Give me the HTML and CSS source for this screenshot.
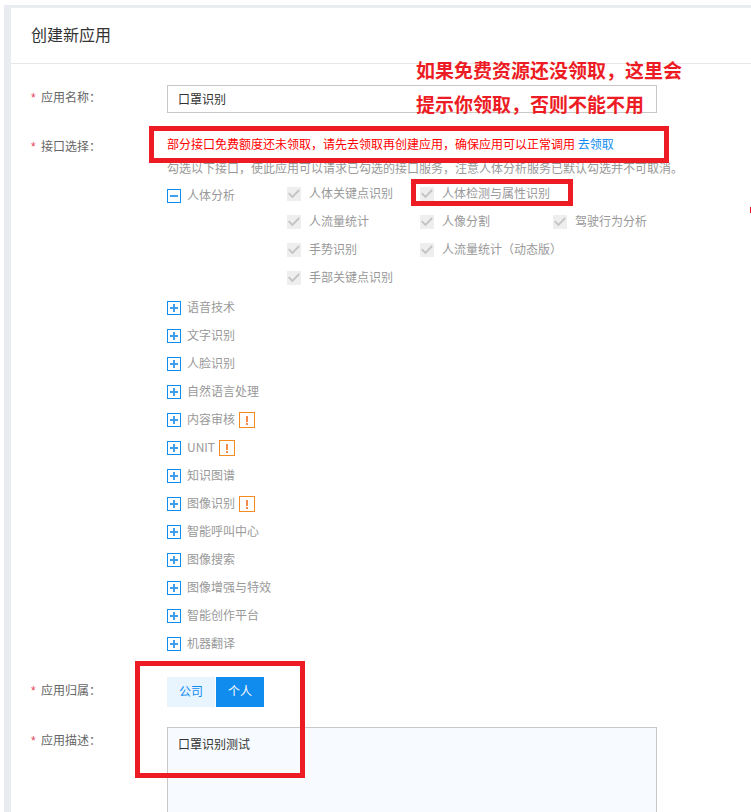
FILE: index.html
```html
<!DOCTYPE html>
<html lang="zh-CN">
<head>
  <meta charset="UTF-8">
  <title>创建新应用</title>
  <link rel="stylesheet" href="styles.css">
</head>
<body>
  <!-- 勾选框里的对勾 -->
  <svg class="defs" width="0" height="0">
    <symbol id="check" viewBox="0 0 14 14">
      <path d="M1.7 6.2L5.4 9.9L12.2 3" fill="none" stroke="#c4c4c4" stroke-width="1.8"/>
    </symbol>
  </svg>

  <div class="panel">
    <h1>创建新应用</h1>

    <form class="form">
      <div class="row row-name">
        <label for="name"><i>*</i>应用名称：</label>
        <input id="name" class="name" type="text" value="口罩识别">
      </div>

      <div class="row row-api">
        <label><i>*</i>接口选择：</label>
        <div class="field">
          <p class="warning">部分接口免费额度还未领取，请先去领取再创建应用，确保应用可以正常调用 <a>去领取</a></p>
          <p class="hint">勾选以下接口，使此应用可以请求已勾选的接口服务，注意人体分析服务已默认勾选并不可取消。</p>

          <div class="group">
            <div class="node open"><span class="toggle minus"></span>人体分析</div>
            <div class="options">
              <span class="option"><svg class="box"><use href="#check"/></svg>人体关键点识别</span>
              <span class="option wide"><svg class="box"><use href="#check"/></svg>人体检测与属性识别</span>
              <span class="option"><svg class="box"><use href="#check"/></svg>人流量统计</span>
              <span class="option"><svg class="box"><use href="#check"/></svg>人像分割</span>
              <span class="option"><svg class="box"><use href="#check"/></svg>驾驶行为分析</span>
              <span class="option"><svg class="box"><use href="#check"/></svg>手势识别</span>
              <span class="option wide"><svg class="box"><use href="#check"/></svg>人流量统计（动态版）</span>
              <span class="option"><svg class="box"><use href="#check"/></svg>手部关键点识别</span>
            </div>
          </div>

          <div class="node"><span class="toggle"></span>语音技术</div>
          <div class="node"><span class="toggle"></span>文字识别</div>
          <div class="node"><span class="toggle"></span>人脸识别</div>
          <div class="node"><span class="toggle"></span>自然语言处理</div>
          <div class="node"><span class="toggle"></span>内容审核<span class="tip"></span></div>
          <div class="node"><span class="toggle"></span>UNIT<span class="tip"></span></div>
          <div class="node"><span class="toggle"></span>知识图谱</div>
          <div class="node"><span class="toggle"></span>图像识别<span class="tip"></span></div>
          <div class="node"><span class="toggle"></span>智能呼叫中心</div>
          <div class="node"><span class="toggle"></span>图像搜索</div>
          <div class="node"><span class="toggle"></span>图像增强与特效</div>
          <div class="node"><span class="toggle"></span>智能创作平台</div>
          <div class="node"><span class="toggle"></span>机器翻译</div>
        </div>
      </div>

      <div class="row row-owner">
        <label><i>*</i>应用归属：</label>
        <div class="switch">
          <button type="button">公司</button>
          <button type="button" class="active">个人</button>
        </div>
      </div>

      <div class="row row-desc">
        <label for="desc"><i>*</i>应用描述：</label>
        <textarea id="desc" class="desc">口罩识别测试</textarea>
      </div>
    </form>
  </div>

  <!-- 标注 -->
  <p class="note">如果免费资源还没领取，这里会<br>提示你领取，否则不能不用</p>
  <div class="mark mark-warning"></div>
  <div class="mark mark-option"></div>
  <div class="mark mark-owner"></div>
  <div class="mark-edge"></div>
</body>
</html>
```

FILE: styles.css
```css
* {
  box-sizing: border-box;
}
body {
  position: relative;
  margin: 0;
  padding: 5px 0 0 4px;
  height: 812px;
  overflow: hidden;
  background: #fff;
  color: #999;
  font-family: "Noto Sans CJK SC", sans-serif;
  font-size: 12px;
  line-height: 20px;
}
p {
  margin: 0;
}
.defs {
  position: absolute;
}
.panel {
  height: 807px;
  overflow: hidden;
  border-top: 3px solid #e8ebf0;
  border-left: 7px solid #e8ebf0;
}
h1 {
  height: 56px;
  margin: 0;
  padding-left: 20px;
  border-bottom: 1px solid #e8e8e8;
  color: #333;
  font-size: 16px;
  font-weight: normal;
  line-height: 52px;
}
.form {
  padding: 21px 0 0 20px;
}
.row {
  display: flex;
  align-items: flex-start;
}
label {
  flex: none;
  width: 136px;
  color: #666;
  font-feature-settings: "halt";
}
label i {
  display: inline-block;
  width: 10px;
  color: #e6455a;
  font-family: "Liberation Sans", sans-serif;
  font-style: normal;
}
.name, .desc {
  width: 490px;
  margin: 0;
  padding: 0 10px;
  border: 1px solid #c8c8c8;
  border-radius: 0;
  outline: none;
  background: #fff;
  color: #333;
  font: inherit;
}
.name {
  height: 28px;
  padding-bottom: 2px;
}
.row-name label {
  padding-top: 2px;
}
.row-api {
  margin-top: 21px;
}
.row-api label {
  padding-top: 2px;
}
.warning {
  color: #f00;
}
.warning a {
  color: #108cee;
}
.hint {
  margin-top: 4px;
}
.group {
  display: flex;
  height: 115px;
  margin-top: 1px;
}
.node {
  display: flex;
  align-items: flex-start;
  height: 28px;
  line-height: 26px;
}
.node.open {
  width: 120px;
  margin-top: 3px;
}
.toggle {
  width: 14px;
  height: 14px;
  margin: 7px 6px 0 0;
  border: 1px solid #108cee;
  background:
    linear-gradient(#3f9fee, #3f9fee) center / 8px 2px no-repeat,
    linear-gradient(#3f9fee, #3f9fee) center / 2px 8px no-repeat;
}
.toggle.minus {
  background: linear-gradient(#3f9fee, #3f9fee) center / 8px 2px no-repeat;
}
.tip {
  display: flex;
  justify-content: center;
  width: 16px;
  height: 16px;
  margin: 6px 0 0 4px;
  padding-top: 3px;
  border: 1px solid #f38b1e;
}
/* 感叹号 */
.tip::before {
  content: "";
  width: 2px;
  height: 9px;
  background: linear-gradient(#f68a4a 6px, #fff 6px, #fff 7px, #f68a4a 7px);
}
.options {
  display: grid;
  grid-template-columns: repeat(3, 133px);
  grid-auto-rows: 28px;
  margin-top: 1px;
}
.option {
  display: flex;
  align-items: flex-start;
  line-height: 26px;
  white-space: nowrap;
}
.option.wide {
  grid-column: span 2;
}
.box {
  width: 14px;
  height: 14px;
  margin: 7px 8px 0 0;
  background: #eee;
}
.row-owner {
  margin-top: 19px;
}
.row-owner label {
  padding-top: 3px;
}
.switch {
  display: flex;
  gap: 1px;
}
.switch button {
  width: 48px;
  height: 30px;
  padding: 0 0 2px;
  border: 0;
  background: #e8f5ff;
  color: #108cee;
  font: inherit;
}
.switch .active {
  background: #108cee;
  color: #fff;
}
.row-desc {
  margin-top: 20px;
}
.row-desc label {
  padding-top: 3px;
}
.desc {
  height: 120px;
  padding-top: 6px;
  background: #f7fbff;
  resize: none;
}
.note {
  position: absolute;
  top: 53px;
  left: 416px;
  color: #ed1c24;
  font-size: 19px;
  font-weight: bold;
  line-height: 34px;
  white-space: nowrap;
}
.mark {
  position: absolute;
  border: 5px solid #ed1c24;
}
.mark-warning {
  top: 126px;
  left: 149px;
  width: 520px;
  height: 37px;
}
.mark-option {
  top: 179px;
  left: 411px;
  width: 162px;
  height: 27px;
}
.mark-owner {
  top: 661px;
  left: 135px;
  width: 170px;
  height: 117px;
}
.mark-edge {
  position: absolute;
  top: 207px;
  right: 0;
  width: 1px;
  height: 6px;
  background: #ed1c24;
}
```
